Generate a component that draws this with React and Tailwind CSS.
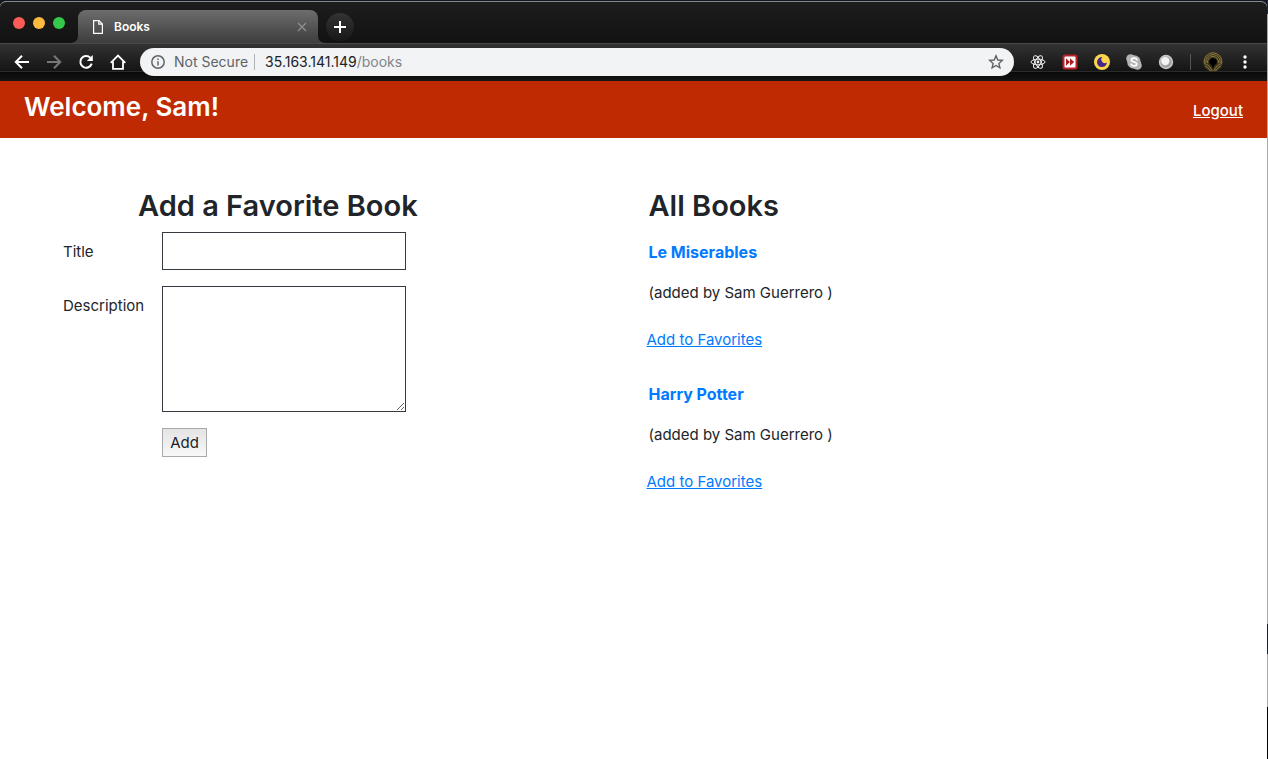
import React from "react";

const books = [
  { title: "Le Miserables", addedBy: "Sam Guerrero" },
  { title: "Harry Potter", addedBy: "Sam Guerrero" },
];

function TabStrip() {
  return (
    <div className="flex h-[41px] items-end bg-linear-to-b from-[#1d1d1d] to-[#121212]">
      <div className="flex w-[78px] gap-2 self-start pt-[15px] pl-[13px]">
        <button aria-label="Close window" className="size-3 rounded-full bg-[#fc5b57]" />
        <button aria-label="Minimize window" className="size-3 rounded-full bg-[#fdbb3e]" />
        <button aria-label="Zoom window" className="size-3 rounded-full bg-[#34c94a]" />
      </div>
      <div className="relative flex h-[33px] w-[240px] items-center rounded-t-lg bg-linear-to-b from-[#6d6d6d] to-[#3d3d3d] pr-[10px] pl-[14px]">
        <svg className="absolute bottom-0 -left-2 size-2" viewBox="0 0 8 8" aria-hidden="true">
          <path d="M0 8 Q8 8 8 0 V8 Z" fill="#404040" />
        </svg>
        <svg className="absolute -right-2 bottom-0 size-2" viewBox="0 0 8 8" aria-hidden="true">
          <path d="M8 8 Q0 8 0 0 V8 Z" fill="#404040" />
        </svg>
        <svg width="12" height="16" viewBox="0 0 12 16" fill="none" stroke="#fff" strokeWidth="1.2" aria-hidden="true">
          <path d="M1.6 1.6 H7 L10.4 5 V14.4 H1.6 Z M6.8 1.6 V5.2 H10.4" />
        </svg>
        <span className="ml-[10px] flex-1 text-[12px] font-semibold text-white">Books</span>
        <button aria-label="Close tab">
          <svg width="12" height="12" viewBox="0 0 12 12" stroke="#8f8f8f" strokeWidth="1.3" aria-hidden="true">
            <path d="M2 2 L10 10 M10 2 L2 10" />
          </svg>
        </button>
      </div>
      <button aria-label="New tab" className="mb-[2px] ml-2 flex size-7 items-center justify-center rounded-full bg-linear-to-b from-[#333] to-[#181818]">
        <svg width="14" height="14" viewBox="0 0 14 14" stroke="#fff" strokeWidth="2" aria-hidden="true">
          <path d="M7 1 V13 M1 7 H13" />
        </svg>
      </button>
    </div>
  );
}

function NavButtons() {
  return (
    <div className="flex items-center gap-4">
      <button aria-label="Back">
        <svg width="16" height="16" viewBox="0 0 16 16" fill="none" stroke="#fff" strokeWidth="2" aria-hidden="true">
          <path d="M15 8 H2.5 M8 1.8 L1.8 8 L8 14.2" />
        </svg>
      </button>
      <button aria-label="Forward">
        <svg width="16" height="16" viewBox="0 0 16 16" fill="none" stroke="#777" strokeWidth="2" aria-hidden="true">
          <path d="M1 8 H13.5 M8 1.8 L14.2 8 L8 14.2" />
        </svg>
      </button>
      <button aria-label="Reload">
        <svg width="16" height="16" viewBox="0 0 16 16" aria-hidden="true">
          <path d="M13.7 9.6 A5.8 5.8 0 1 1 12.3 3.8" fill="none" stroke="#fff" strokeWidth="2" />
          <path d="M14.8 1 V7 H8.8 Z" fill="#fff" />
        </svg>
      </button>
      <button aria-label="Home">
        <svg width="16" height="16" viewBox="0 0 16 16" fill="none" stroke="#fff" strokeWidth="1.8" aria-hidden="true">
          <path d="M0.7 8.9 L8 1.6 L15.3 8.9 M3 7.4 V14.9 H13 V7.4" />
        </svg>
      </button>
    </div>
  );
}

function Extensions() {
  return (
    <div className="flex items-center gap-4">
      <svg width="16" height="16" viewBox="0 0 16 16" fill="none" stroke="#eee" strokeWidth="1" aria-hidden="true">
        <ellipse cx="8" cy="8" rx="7" ry="2.8" />
        <ellipse cx="8" cy="8" rx="7" ry="2.8" transform="rotate(60 8 8)" />
        <ellipse cx="8" cy="8" rx="7" ry="2.8" transform="rotate(120 8 8)" />
        <circle cx="8" cy="8" r="1.4" fill="#eee" stroke="none" />
      </svg>
      <svg width="16" height="16" viewBox="0 0 16 16" aria-hidden="true">
        <rect x="0.5" y="0.5" width="15" height="15" rx="2.5" fill="#b92329" />
        <rect x="2.5" y="2.5" width="11" height="11" rx="1" fill="#fff" />
        <path d="M4 4.3 L8 8 L4 11.7 Z M8 4.3 L12.2 8 L8 11.7 Z" fill="#a91d23" />
      </svg>
      <svg width="16" height="16" viewBox="0 0 16 16" aria-hidden="true">
        <circle cx="8" cy="8" r="8" fill="#fbd54a" />
        <path d="M8.2 3.1 A5 5 0 1 0 13 8.6 A3.7 3.7 0 0 1 8.2 3.1 Z" fill="#42268c" />
      </svg>
      <svg width="16" height="16" viewBox="0 0 16 16" aria-hidden="true">
        <circle cx="4.6" cy="4.6" r="4.4" fill="#b4b4b4" />
        <circle cx="11.4" cy="11.4" r="4.4" fill="#b4b4b4" />
        <circle cx="8" cy="8" r="6.8" fill="#b4b4b4" />
        <path d="M10.9 5.6 C10.2 3.6 5.4 3.6 5.4 6 C5.4 8.6 10.8 7.3 10.8 10 C10.8 12.4 5.7 12.3 5.1 10.2" fill="none" stroke="#fff" strokeWidth="1.7" strokeLinecap="round" />
      </svg>
      <svg width="16" height="16" viewBox="0 0 16 16" aria-hidden="true">
        <circle cx="8" cy="8" r="7.2" fill="#c8c8c8" />
        <circle cx="8" cy="8" r="5.6" fill="#a0a0a0" />
        <circle cx="7.3" cy="7.1" r="4.2" fill="#f2f2f2" />
      </svg>
    </div>
  );
}

function Toolbar() {
  return (
    <div className="relative h-[38px] bg-linear-to-b from-[#343434] to-[#141414] to-75%">
      <div className="absolute inset-x-0 top-7 bottom-0 border-t border-[#2b2b2b] bg-linear-to-b from-[#090909] to-[#151515]" />
      <div className="relative flex h-full items-center border-t border-[#484848] pr-[14px] pb-[2px] pl-[14px]">
        <NavButtons />
        <form role="search" className="ml-[14px] flex h-7 flex-1 items-center rounded-full bg-[#f1f3f4] pr-[10px] pl-[11px] text-[14px]">
          <svg width="14" height="14" viewBox="0 0 14 14" fill="none" stroke="#5f6368" strokeWidth="1.5" aria-hidden="true">
            <circle cx="7" cy="7" r="6.2" />
            <path d="M7 6.2 V10.5 M7 3.5 V5" />
          </svg>
          <span className="ml-[9px] text-[#5f6368]">Not Secure</span>
          <span className="mr-[10px] ml-[6px] h-4 w-px bg-[#b0b2b5]" />
          <a href="#books" className="flex-1 text-[#202124]">
            35.163.141.149<span className="text-[#80868b]">/books</span>
          </a>
          <button type="button" aria-label="Bookmark this page">
            <svg width="16" height="16" viewBox="0 0 16 16" fill="none" stroke="#5f6368" strokeWidth="1.4" aria-hidden="true">
              <path d="M8 1.8 L9.8 6 L14.3 6.4 L10.9 9.4 L11.9 13.8 L8 11.5 L4.1 13.8 L5.1 9.4 L1.7 6.4 L6.2 6 Z" />
            </svg>
          </button>
        </form>
        <div className="ml-4 flex items-center">
          <Extensions />
          <span className="mr-3 ml-4 h-4 w-px bg-[#555]" />
          <button aria-label="Profile">
            <svg width="20" height="20" viewBox="0 0 20 20" fill="none" stroke="#a08a4d" strokeWidth="0.8" aria-hidden="true">
              <circle cx="10" cy="10" r="9.8" fill="#3a321b" stroke="none" />
              <path d="M1.2 11 A8.9 8.9 0 1 1 18.8 11 M2.9 11 A7.2 7.2 0 1 1 17.1 11 M4.6 11 A5.5 5.5 0 1 1 15.4 11" />
              <path d="M1 11.6 Q6 12 9.2 19 M2 14 Q5 14.5 7.6 19.2 M19 11.6 Q14 12 10.8 19 M18 14 Q15 14.5 12.4 19.2" />
              <path d="M10 6 A4 4 0 0 1 13.8 11 Q11.4 13 10 17 Q8.6 13 6.2 11 A4 4 0 0 1 10 6 Z" fill="#000" stroke="none" />
            </svg>
          </button>
          <button aria-label="Menu" className="ml-[14px]">
            <svg width="16" height="16" viewBox="0 0 16 16" fill="#fff" aria-hidden="true">
              <circle cx="8" cy="3" r="1.7" />
              <circle cx="8" cy="8" r="1.7" />
              <circle cx="8" cy="13" r="1.7" />
            </svg>
          </button>
        </div>
      </div>
    </div>
  );
}

function BookForm() {
  return (
    <section className="pl-[63px]">
      <h2 className="mb-[7px] pl-[75px] text-[29px] leading-[38px] font-semibold">
        Add a Favorite Book
      </h2>
      <form className="grid grid-cols-[83px_244px] gap-4">
        <label htmlFor="title" className="pt-2">Title</label>
        <input id="title" type="text" className="h-[38px] border border-[#343a40] px-2" />
        <label htmlFor="description" className="pt-2">Description</label>
        <textarea id="description" className="h-[126px] resize border border-[#343a40] px-2" />
        <button type="button" className="col-start-2 h-[29px] w-[45px] border border-[#a9a9a9] bg-linear-to-b from-[#e4e4e4] to-[#f8f8f8]">
          Add
        </button>
      </form>
    </section>
  );
}

function BookList() {
  return (
    <section className="pl-[13px]">
      <h2 className="mb-4 pl-[2px] text-[29px] leading-[38px] font-semibold">
        All Books
      </h2>
      <ul className="flex flex-col gap-[31px]">
        {books.map((book) => (
          <li key={book.title}>
            <a href="#book" className="block pl-[2px] text-[16px] leading-[22px] font-bold text-[#007bff]">{book.title}</a>
            <p className="mt-[18px] mb-[23px] pl-[2px]">(added by {book.addedBy} )</p>
            <a href="#favorite" className="block text-[#007bff] underline">Add to Favorites</a>
          </li>
        ))}
      </ul>
    </section>
  );
}

export default function App() {
  return (
    <div className="flex min-h-screen bg-[#111822] font-['Inter','Liberation_Sans',sans-serif] text-[15px] leading-6 text-[#212529]">
      <div className="mt-px flex flex-1 flex-col overflow-hidden rounded-t-md border-t border-[#85878b] bg-white">
        <TabStrip />
        <Toolbar />
        <header className="flex h-[57px] items-center justify-between bg-[#c02a02] px-6 text-white">
          <h1 className="pb-[6px] text-[26px] leading-8 font-semibold">Welcome, Sam!</h1>
          <a href="#logout" className="pt-[2px] font-medium underline">Logout</a>
        </header>
        <main className="grid grid-cols-2 pt-[49px]">
          <BookForm />
          <BookList />
        </main>
      </div>
      <div className="flex w-px flex-col bg-[#a9a9a9]">
        <span className="h-[14px] bg-[#1b2433]" />
        <span className="mt-auto mb-[53px] h-[30px] bg-[#1b2433]" />
        <span className="h-[52px] bg-black" />
      </div>
    </div>
  );
}
